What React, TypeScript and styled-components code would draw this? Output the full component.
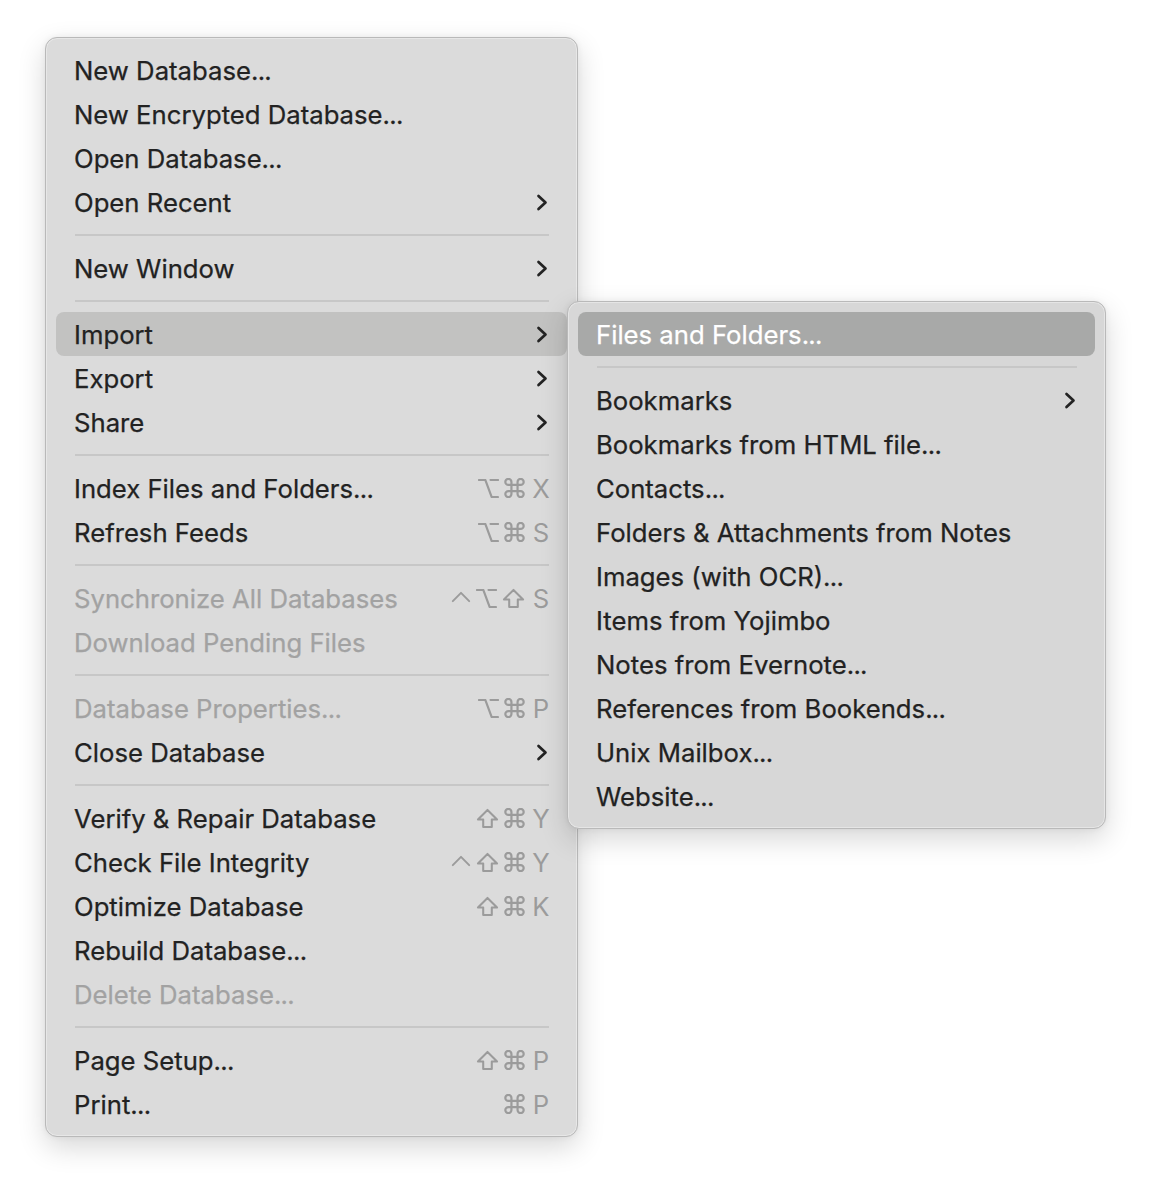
import React from "react";
import styled, { createGlobalStyle } from "styled-components";

const GlobalStyle = createGlobalStyle`
  html, body { margin: 0; padding: 0; background: #ffffff; }
  body { font-family: Inter, "Noto Sans", "Liberation Sans", sans-serif; -webkit-font-smoothing: antialiased; }
`;

const Stage = styled.div`
  width: 1152px;
  height: 1190px;
  box-sizing: border-box;
  padding: 37px 0 0 45px;
  display: flex;
  align-items: flex-start;
`;

const Menu = styled.div<{ $width: number; $offsetTop?: number; $overlap?: number; $bg: string }>`
  width: ${(p) => p.$width}px;
  box-sizing: border-box;
  margin-top: ${(p) => p.$offsetTop ?? 0}px;
  margin-left: ${(p) => -(p.$overlap ?? 0)}px;
  padding: 10px;
  background: ${(p) => p.$bg};
  border: 1px solid #b9b9b9;
  border-radius: 12px;
  box-shadow: inset 0 0 0 1px rgba(255, 255, 255, 0.35), 0 10px 28px rgba(0, 0, 0, 0.16),
    0 0 6px rgba(0, 0, 0, 0.06);
  display: flex;
  flex-direction: column;
  position: relative;
  z-index: ${(p) => (p.$overlap ? 2 : 1)};
`;

const Item = styled.div<{ $state?: "hover" | "active"; $disabled?: boolean }>`
  height: 44px;
  display: flex;
  align-items: center;
  padding: 0 17px 0 18px;
  border-radius: 8px;
  font-size: 25.7px;
  letter-spacing: 0;
  color: ${(p) => (p.$state === "active" ? "#ffffff" : p.$disabled ? "#a2a2a2" : "#222222")};
  background: ${(p) =>
    p.$state === "hover" ? "#c2c2c1" : p.$state === "active" ? "#a8a9a8" : "transparent"};
`;

const Label = styled.span`
  flex: 1;
  white-space: nowrap;
  -webkit-text-stroke: 0.25px currentColor;
`;

const Dots = styled.span`
  letter-spacing: -0.7px;
`;

const Separator = styled.div`
  height: 22px;
  display: flex;
  align-items: center;
  padding: 0 18px 0 19px;
  &::after {
    content: "";
    flex: 1;
    height: 2px;
    background: #c7c7c7;
  }
`;

const Keys = styled.span`
  display: flex;
  align-items: center;
  gap: 5px;
  color: #9b9b9b;
`;

const KeyLetter = styled.span`
  width: 18px;
  margin-left: 2px;
  text-align: center;
  font-size: 25.7px;
  color: #9b9b9b;
`;

const Glyph = styled.svg<{ $top?: boolean }>`
  display: block;
  fill: none;
  stroke: #9b9b9b;
  stroke-width: 2.15;
  stroke-linecap: round;
  stroke-linejoin: round;
  align-self: ${(p) => (p.$top ? "flex-start" : "center")};
  margin-top: ${(p) => (p.$top ? "8px" : "0")};
`;

const ChevronSvg = styled.svg`
  display: block;
  fill: none;
  stroke: #232323;
  stroke-width: 2.7;
  stroke-linecap: round;
  stroke-linejoin: round;
  margin-right: 2px;
`;

type Mod = "cmd" | "opt" | "shift" | "ctrl";

const ModGlyph = ({ m }: { m: Mod }) => {
  if (m === "cmd")
    return (
      <Glyph width={21} height={20} viewBox="2.2 2.2 19.6 19.6">
        <path d="M15 6v12a3 3 0 1 0 3-3H6a3 3 0 1 0 3 3V6a3 3 0 1 0-3 3h12a3 3 0 1 0-3-3" />
      </Glyph>
    );
  if (m === "opt")
    return (
      <Glyph width={21} height={19} viewBox="2 2 20 20" preserveAspectRatio="none">
        <path d="M3 3h6l6 18h6" />
        <path d="M14 3h7" />
      </Glyph>
    );
  if (m === "shift")
    return (
      <Glyph width={23} height={21} viewBox="0 0 24 22">
        <path d="M12 2L22 12H16.5V20H7.5V12H2Z" />
      </Glyph>
    );
  return (
    <Glyph $top width={20} height={12} viewBox="0 0 22 13">
      <path d="M2 11L11 2L20 11" />
    </Glyph>
  );
};

const Chevron = () => (
  <ChevronSvg width={12} height={17} viewBox="0 0 12 17">
    <path d="M2.5 2L9.5 8.5L2.5 15" />
  </ChevronSvg>
);

type Entry =
  | { sep: true }
  | {
      sep?: false;
      label: string;
      sub?: boolean;
      disabled?: boolean;
      state?: "hover" | "active";
      mods?: Mod[];
      key?: string;
    };

const mainItems: Entry[] = [
  { label: "New Database..." },
  { label: "New Encrypted Database..." },
  { label: "Open Database..." },
  { label: "Open Recent", sub: true },
  { sep: true },
  { label: "New Window", sub: true },
  { sep: true },
  { label: "Import", sub: true, state: "hover" },
  { label: "Export", sub: true },
  { label: "Share", sub: true },
  { sep: true },
  { label: "Index Files and Folders...", mods: ["opt", "cmd"], key: "X" },
  { label: "Refresh Feeds", mods: ["opt", "cmd"], key: "S" },
  { sep: true },
  { label: "Synchronize All Databases", disabled: true, mods: ["ctrl", "opt", "shift"], key: "S" },
  { label: "Download Pending Files", disabled: true },
  { sep: true },
  { label: "Database Properties...", disabled: true, mods: ["opt", "cmd"], key: "P" },
  { label: "Close Database", sub: true },
  { sep: true },
  { label: "Verify & Repair Database", mods: ["shift", "cmd"], key: "Y" },
  { label: "Check File Integrity", mods: ["ctrl", "shift", "cmd"], key: "Y" },
  { label: "Optimize Database", mods: ["shift", "cmd"], key: "K" },
  { label: "Rebuild Database..." },
  { label: "Delete Database...", disabled: true },
  { sep: true },
  { label: "Page Setup...", mods: ["shift", "cmd"], key: "P" },
  { label: "Print...", mods: ["cmd"], key: "P" },
];

const subItems: Entry[] = [
  { label: "Files and Folders...", state: "active" },
  { sep: true },
  { label: "Bookmarks", sub: true },
  { label: "Bookmarks from HTML file..." },
  { label: "Contacts..." },
  { label: "Folders & Attachments from Notes" },
  { label: "Images (with OCR)..." },
  { label: "Items from Yojimbo" },
  { label: "Notes from Evernote..." },
  { label: "References from Bookends..." },
  { label: "Unix Mailbox..." },
  { label: "Website..." },
];

const renderLabel = (text: string) => {
  if (!text.endsWith("...")) return text;
  return (
    <>
      {text.slice(0, -3)}
      <Dots>...</Dots>
    </>
  );
};

const renderEntries = (entries: Entry[]) =>
  entries.map((e, i) => {
    if (e.sep) return <Separator key={i} />;
    return (
      <Item key={i} $state={e.state} $disabled={e.disabled}>
        <Label>{renderLabel(e.label)}</Label>
        {e.sub && <Chevron />}
        {e.key && (
          <Keys>
            {e.mods?.map((m, j) => (
              <ModGlyph key={j} m={m} />
            ))}
            <KeyLetter>{e.key}</KeyLetter>
          </Keys>
        )}
      </Item>
    );
  });

export default function App() {
  return (
    <>
      <GlobalStyle />
      <Stage>
        <Menu $width={533} $bg="#dbdbdb">
          {renderEntries(mainItems)}
        </Menu>
        <Menu $width={539} $offsetTop={264} $overlap={11} $bg="#d7d7d7">
          {renderEntries(subItems)}
        </Menu>
      </Stage>
    </>
  );
}
